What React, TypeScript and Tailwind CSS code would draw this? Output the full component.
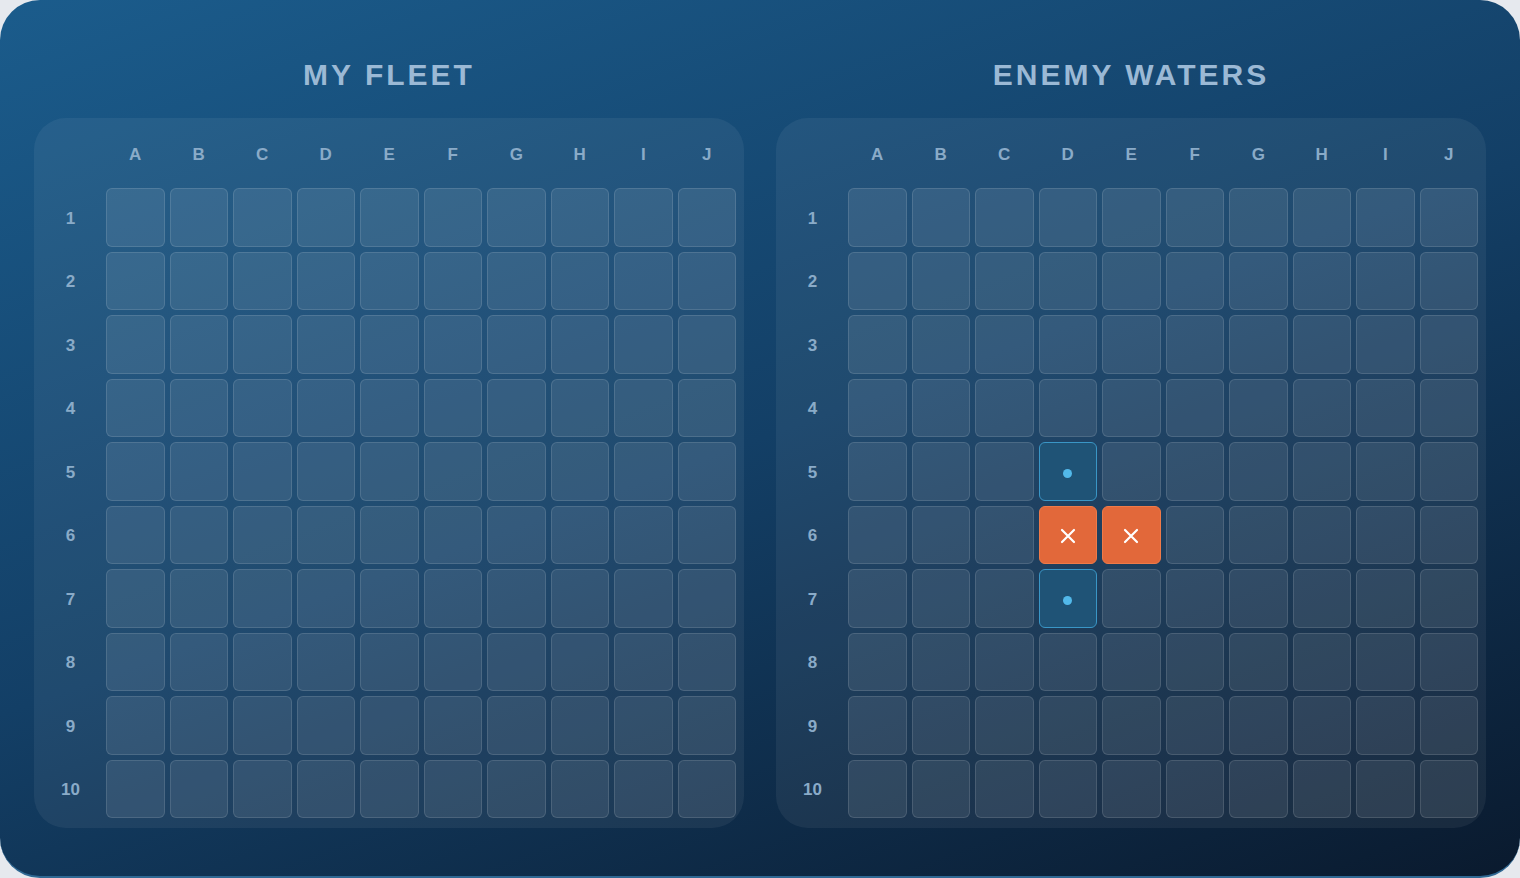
import { FC } from "react";

type Mark = "hit" | "miss";

const COLS = ["A", "B", "C", "D", "E", "F", "G", "H", "I", "J"];
const ROWS = [1, 2, 3, 4, 5, 6, 7, 8, 9, 10];

// shots fired into enemy waters, keyed by coordinate
const enemyShots: Record<string, Mark> = {
  D5: "miss",
  D6: "hit",
  E6: "hit",
  D7: "miss",
};

const Cell: FC<{ mark?: Mark }> = ({ mark }) => {
  if (mark === "hit") {
    return (
      <div className="flex items-center justify-center rounded-[6px] border-[1.5px] border-[#ef7a48] bg-[#e2683a]">
        <svg width="20" height="20" viewBox="0 0 20 20" fill="none" className="mt-[3px]">
          <path d="M4 4L16 16M16 4L4 16" stroke="#fff" strokeWidth="2.2" strokeLinecap="round" />
        </svg>
      </div>
    );
  }
  if (mark === "miss") {
    return (
      <div className="flex items-center justify-center rounded-[6px] border-[1.5px] border-[#3a96c6] bg-[#1f5376]">
        <span className="mt-[4px] h-[9px] w-[9px] rounded-full bg-[#52b9ea]" />
      </div>
    );
  }
  return <div className="rounded-[6px] border-[1.5px] border-white/[0.12] bg-white/[0.09]" />;
};

interface BoardProps {
  title: string;
  shots?: Record<string, Mark>;
}

const Board: FC<BoardProps> = ({ title, shots = {} }) => (
  <div className="flex flex-col items-center">
    <h2 className="flex h-[118px] items-start pt-[57px] text-[30px] font-bold leading-[36px] tracking-[3px] text-[#9bb9d5]">
      {title}
    </h2>
    <div className="h-[710px] w-[710px] rounded-[32px] bg-white/[0.06] p-2">
      <div className="grid grid-cols-[59px_repeat(10,58.5px)] grid-rows-[57px_repeat(10,58.5px)] gap-[5px]">
        <div />
        {COLS.map((c) => (
          <div key={c} className="flex items-center justify-center text-[17px] font-bold text-[#8aabc8]">
            {c}
          </div>
        ))}
        {ROWS.map((r) => (
          <>
            <div key={`l${r}`} className="flex items-center justify-center pr-[2px] pt-[2px] text-[17px] font-bold text-[#8aabc8]">
              {r}
            </div>
            {COLS.map((c) => (
              <Cell key={`${c}${r}`} mark={shots[`${c}${r}`]} />
            ))}
          </>
        ))}
      </div>
    </div>
  </div>
);

export default function App() {
  return (
    <div className="min-h-screen bg-[#e6e9ee]" style={{ fontFamily: '"Liberation Sans", Arial, sans-serif' }}>
      <div className="flex h-[878px] w-[1520px] justify-between overflow-hidden rounded-[40px] border-b-2 border-[#2f6893] bg-[linear-gradient(160deg,#1b5c8c_0%,#133f66_50%,#0a1a2e_100%)] px-[34px]">
        <Board title="MY FLEET" />
        <Board title="ENEMY WATERS" shots={enemyShots} />
      </div>
    </div>
  );
}
